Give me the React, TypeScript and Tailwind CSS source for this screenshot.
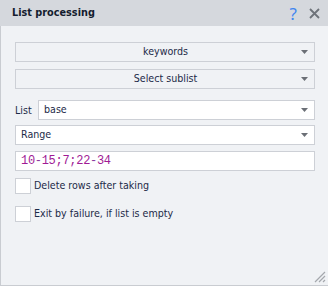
import React from "react";

const Arrow = () => (
  <svg width="7" height="4" viewBox="0 0 7 4" className="shrink-0">
    <path d="M0 0 H7 L3.5 4 Z" fill="#6b6f76" />
  </svg>
);

export default function App() {
  const font = { fontFamily: '"DejaVu Sans Condensed", "DejaVu Sans", sans-serif' };
  return (
    <div
      className="w-[328px] h-[286px] bg-[#f0f2f5] flex flex-col text-[10.6px] text-[#1d2a48] border-l border-b border-[#c9ccd1] relative"
      style={font}
    >
      <div className="h-[26px] bg-[#d5d8dd] flex items-center pl-[12px] pr-[6px] shrink-0 -ml-px">
        <span className="font-bold text-[10.8px] text-[#141c2e] flex-1">List processing</span>
        <span
          className="text-[#3f86f0] text-[17px] leading-none mr-[12px]"
          style={{ fontFamily: '"Noto Sans", sans-serif' }}
        >
          ?
        </span>
        <svg width="11" height="11" viewBox="0 0 11 11" className="mr-[2px]">
          <path d="M1 1 L10 10 M10 1 L1 10" stroke="#6e737a" strokeWidth="1.8" />
        </svg>
      </div>
      <div className="flex flex-col pl-[14px] pr-[13px] pt-[16px]">
        <div className="h-[20px] border border-[#cdd0d6] bg-[#f0f2f5] flex items-center pl-2 pr-[6px]">
          <span className="flex-1 text-center pl-[6px]">keywords</span>
          <Arrow />
        </div>
        <div className="h-[20px] mt-[7px] border border-[#cdd0d6] bg-[#f0f2f5] flex items-center pl-2 pr-[6px]">
          <span className="flex-1 text-center pl-[6px]">Select sublist</span>
          <Arrow />
        </div>
        <div className="flex items-center mt-[11px] h-[20px]">
          <span className="w-[23px] pt-[2px]">List</span>
          <div className="flex-1 h-[20px] border border-[#cdd0d6] bg-white flex items-center pl-[5px] pr-[6px]">
            <span className="flex-1">base</span>
            <Arrow />
          </div>
        </div>
        <div className="h-[20px] mt-[5px] border border-[#cdd0d6] bg-white flex items-center pl-[5px] pr-[6px]">
          <span className="flex-1">Range</span>
          <Arrow />
        </div>
        <div
          className="h-[20px] mt-[6px] border border-[#cdd0d6] bg-white flex items-center pl-[5px] text-[12px]"
          style={{ fontFamily: '"Liberation Mono", monospace' }}
        >
          <span className="text-[#a01a95] tracking-[-0.3px]">
            10<span className="text-[#8b3aa0]">-</span>15;7;22<span className="text-[#8b3aa0]">-</span>34
          </span>
        </div>
        <div className="flex items-center mt-[7px] h-[16px]">
          <div className="w-[16px] h-[16px] border border-[#cdd0d6] bg-white" />
          <span className="ml-[3px]">Delete rows after taking</span>
        </div>
        <div className="flex items-center mt-[12px] h-[16px]">
          <div className="w-[16px] h-[16px] border border-[#cdd0d6] bg-white" />
          <span className="ml-[3px]">Exit by failure, if list is empty</span>
        </div>
      </div>
      <svg width="12" height="12" viewBox="0 0 12 12" className="absolute right-[2px] bottom-[2px]">
        <path d="M11 1 L1 11 M11 5 L5 11 M11 9 L9 11" stroke="#a5a8ad" strokeWidth="1.2" />
      </svg>
    </div>
  );
}
